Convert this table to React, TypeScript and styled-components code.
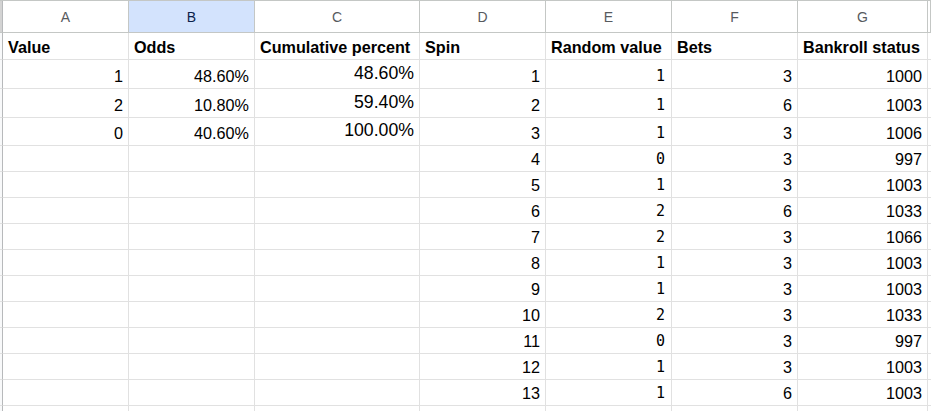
import React from "react";
import styled, { createGlobalStyle } from "styled-components";

const Global = createGlobalStyle`
  html, body { margin: 0; padding: 0; background: #ffffff; }
  body { font-family: "Liberation Sans", Arial, sans-serif; overflow: hidden; }
`;

const COLS = "3px 126px 126px 165px 126px 126px 126px 130px 1fr";

const Sheet = styled.div`
  width: 931px;
  height: 411px;
  overflow: hidden;
  display: flex;
  flex-direction: column;
`;

const Row = styled.div<{ $h: number }>`
  display: grid;
  grid-template-columns: ${COLS};
  height: ${(p) => p.$h}px;
  flex: 0 0 auto;
`;

const HeaderRow = styled(Row)`
  border-top: 1px solid #c4c7c5;
`;

const Gutter = styled.div<{ $head?: boolean }>`
  box-sizing: border-box;
  background: ${(p) => (p.$head ? "#d3d3d3" : "#f8f9fa")};
  border-right: 1px solid #b7b9bb;
  border-bottom: 1px solid ${(p) => (p.$head ? "#c4c7c5" : "#e1e1e1")};
`;

const ColHead = styled.div<{ $sel?: boolean }>`
  box-sizing: border-box;
  display: flex;
  align-items: center;
  justify-content: center;
  background: ${(p) => (p.$sel ? "#d3e3fd" : "#ffffff")};
  color: ${(p) => (p.$sel ? "#0b1f4a" : "#575a5e")};
  font-size: 14px;
  border-right: 1px solid #c4c7c5;
  border-bottom: 1px solid #c4c7c5;
  padding-top: 1px;
`;

const Cell = styled.div<{ $right?: boolean; $bold?: boolean; $mono?: boolean; $big?: boolean }>`
  box-sizing: border-box;
  display: flex;
  align-items: flex-end;
  justify-content: ${(p) => (p.$right ? "flex-end" : "flex-start")};
  border-right: 1px solid #e1e1e1;
  border-bottom: 1px solid #e1e1e1;
  padding: 0 ${(p) => (p.$mono ? 6 : 5)}px ${(p) => (p.$big ? 5 : 4)}px 5px;
  color: #000000;
  font-family: ${(p) =>
    p.$mono ? '"DejaVu Sans Mono", "Liberation Mono", monospace' : '"Liberation Sans", Arial, sans-serif'};
  font-size: ${(p) => (p.$mono ? "15px" : p.$big ? "17.7px" : "16.2px")};
  font-weight: ${(p) => (p.$bold ? 700 : 400)};
  line-height: 1;
  white-space: nowrap;
  overflow: hidden;
`;

type DataRow = {
  a?: string;
  b?: string;
  c?: string;
  d: string;
  e: string;
  f: string;
  g: string;
  h: number;
};

const rows: DataRow[] = [
  { a: "1", b: "48.60%", c: "48.60%", d: "1", e: "1", f: "3", g: "1000", h: 29 },
  { a: "2", b: "10.80%", c: "59.40%", d: "2", e: "1", f: "6", g: "1003", h: 29 },
  { a: "0", b: "40.60%", c: "100.00%", d: "3", e: "1", f: "3", g: "1006", h: 28 },
  { d: "4", e: "0", f: "3", g: "997", h: 26 },
  { d: "5", e: "1", f: "3", g: "1003", h: 26 },
  { d: "6", e: "2", f: "6", g: "1033", h: 26 },
  { d: "7", e: "2", f: "3", g: "1066", h: 26 },
  { d: "8", e: "1", f: "3", g: "1003", h: 26 },
  { d: "9", e: "1", f: "3", g: "1003", h: 26 },
  { d: "10", e: "2", f: "3", g: "1033", h: 26 },
  { d: "11", e: "0", f: "3", g: "997", h: 26 },
  { d: "12", e: "1", f: "3", g: "1003", h: 26 },
  { d: "13", e: "1", f: "6", g: "1003", h: 26 },
  { d: "", e: "", f: "", g: "", h: 26 },
];

const letters = ["A", "B", "C", "D", "E", "F", "G", ""];
const titles = ["Value", "Odds", "Cumulative percent", "Spin", "Random value", "Bets", "Bankroll status", ""];

export default function App() {
  return (
    <>
      <Global />
      <Sheet>
        <HeaderRow $h={32}>
          <Gutter $head />
          {letters.map((l, i) => (
            <ColHead key={i} $sel={l === "B"}>
              {l}
            </ColHead>
          ))}
        </HeaderRow>
        <Row $h={27}>
          <Gutter />
          {titles.map((t, i) => (
            <Cell key={i} $bold>
              {t}
            </Cell>
          ))}
        </Row>
        {rows.map((r, i) => (
          <Row key={i} $h={r.h}>
            <Gutter />
            <Cell $right>{r.a ?? ""}</Cell>
            <Cell $right>{r.b ?? ""}</Cell>
            <Cell $right $big>
              {r.c ?? ""}
            </Cell>
            <Cell $right>{r.d}</Cell>
            <Cell $right $mono>
              {r.e}
            </Cell>
            <Cell $right>{r.f}</Cell>
            <Cell $right>{r.g}</Cell>
            <Cell />
          </Row>
        ))}
      </Sheet>
    </>
  );
}
